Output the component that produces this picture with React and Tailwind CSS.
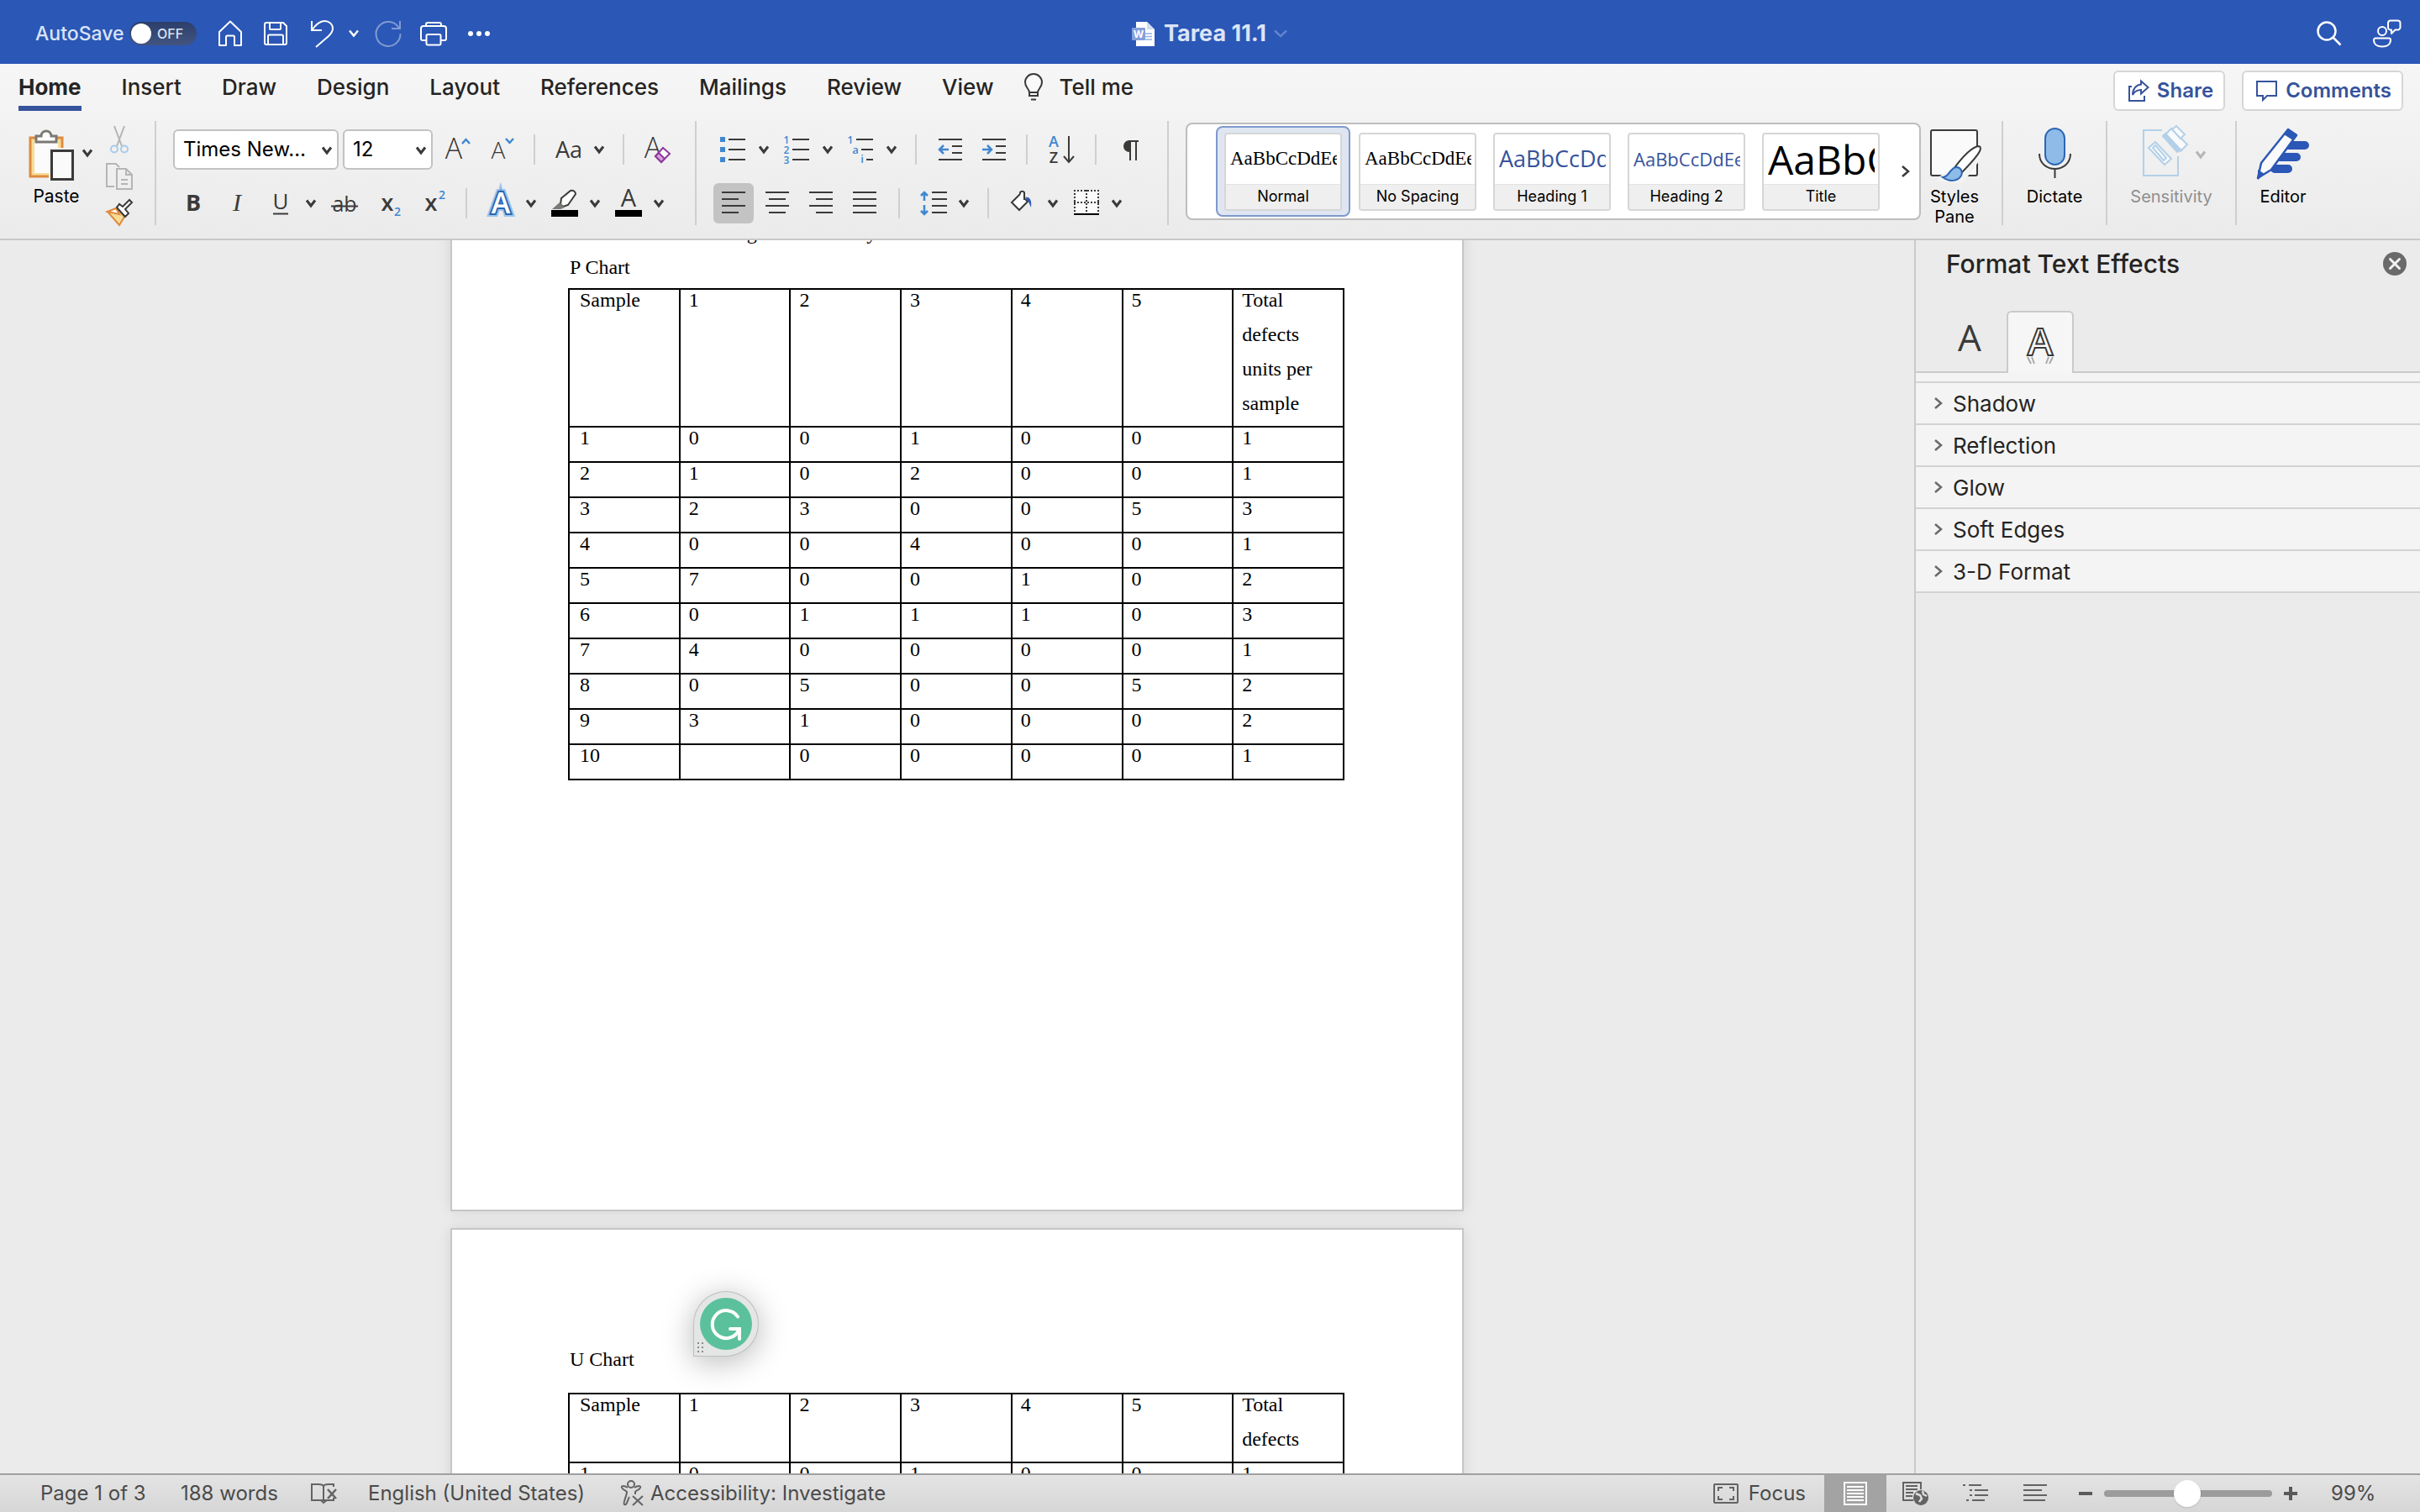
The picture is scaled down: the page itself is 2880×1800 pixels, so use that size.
import React from "react";

const K = "#3b3a39";
const B = "#3f87cf";

function Svg({ w = 32, h = 32, className = "", children, ...rest }) {
  return (
    <svg width={w} height={h} viewBox={`0 0 ${w} ${h}`} fill="none" className={`shrink-0 overflow-visible ${className}`} aria-hidden="true" {...rest}>
      {children}
    </svg>
  );
}

function Chevron({ label, className = "ml-[10px]", color = K }) {
  return (
    <button aria-label={label} className={`flex h-12 w-5 shrink-0 items-center justify-center ${className}`}>
      <Svg w={14} h={12}>
        <path d="M2 2.5 7 9l5-6.5" stroke={color} strokeWidth="3" />
      </Svg>
    </button>
  );
}

function Icon({ label, className = "", children }) {
  return (
    <button aria-label={label} className={`flex h-12 w-8 shrink-0 items-center justify-center ${className}`}>
      <Svg>{children}</Svg>
    </button>
  );
}

const Rule = ({ className = "" }) => <div className={`h-9 w-[2px] shrink-0 bg-[#cfcfcf] ${className}`} />;
const TallRule = ({ className = "" }) => <div className={`h-[124px] w-[2px] shrink-0 bg-[#cfcfcf] ${className}`} />;

function T({ x, y, size, fill = K, weight = 400, family = "Open Sans", children, ...rest }) {
  return (
    <text x={x} y={y} fontSize={size} fill={fill} fontWeight={weight} fontFamily={`"${family}", sans-serif`} textAnchor="middle" {...rest}>
      {children}
    </text>
  );
}

function TitleBar() {
  return (
    <header className="flex h-[76px] shrink-0 items-center bg-[#2b57b6] pt-1 text-[#dbe4f6]">
      <div className="flex flex-1 items-center">
        <span id="autosave" className="ml-[42px] w-[100px] text-[23px] font-medium whitespace-nowrap">AutoSave</span>
        <button role="switch" aria-checked="false" aria-labelledby="autosave" className="ml-3 flex h-7 w-20 items-center rounded-full bg-gradient-to-b from-[#2c3f6b] to-[#435480] pl-[2px]">
          <span className="h-6 w-6 rounded-full bg-white" />
          <span className="ml-[7px] text-[16px] font-medium">OFF</span>
        </button>
        <button aria-label="Home" className="ml-6">
          <Svg stroke="#fff" strokeWidth="2"><path d="M3 14 16 1.500l13 12.500v16h-8v-10a1.500 1.500 0 0 0-1.500-1.500h-7A1.500 1.500 0 0 0 11 20v10H3z" strokeLinejoin="round" /></Svg>
        </button>
        <button aria-label="Save" className="ml-[22px]">
          <Svg stroke="#fff" strokeWidth="2"><path d="M5 3h20l4 4v20a2 2 0 0 1-2 2H5a2 2 0 0 1-2-2V5a2 2 0 0 1 2-2zM9 3v7a1 1 0 0 0 1 1h11a1 1 0 0 0 1-1V3M7 29V19a1.500 1.500 0 0 1 1.500-1.500h15A1.500 1.500 0 0 1 25 19v10" /></Svg>
        </button>
        <button aria-label="Undo" className="ml-6">
          <Svg stroke="#fff" strokeWidth="2"><path d="M3 1v11h12M3 12C8 5 13 1 18 1c6 0 10 4 10 9 0 4-2 6-5 9L8 32" /></Svg>
        </button>
        <button aria-label="Undo history" className="ml-[14px]">
          <Svg w={14} h={12}><path d="M2 2.500 7 8.500l5-6" stroke="#fff" strokeWidth="2.500" /></Svg>
        </button>
        <button aria-label="Redo" className="ml-[18px]">
          <Svg stroke="#809bd3" strokeWidth="2"><path d="M30 1v9H20M29 10A14.500 14.500 0 1 0 30.500 16" /></Svg>
        </button>
        <button aria-label="Print" className="ml-[22px]">
          <Svg stroke="#fff" strokeWidth="2"><path d="M7 7V5a2 2 0 0 1 2-2h14a2 2 0 0 1 2 2v2M8 24H3a2 2 0 0 1-2-2V10a3 3 0 0 1 3-3h24a3 3 0 0 1 3 3v12a2 2 0 0 1-2 2h-5M7.500 18.500a1.500 1.500 0 0 1 1.500-1.500h14a1.500 1.500 0 0 1 1.500 1.500V28a1.500 1.500 0 0 1-1.500 1.500H9A1.500 1.500 0 0 1 7.500 28z" /></Svg>
        </button>
        <button aria-label="More" className="ml-[22px]">
          <Svg><circle cx="6" cy="16" r="3" fill="#fff" /><circle cx="16" cy="16" r="3" fill="#fff" /><circle cx="26" cy="16" r="3" fill="#fff" /></Svg>
        </button>
      </div>
      <div className="flex items-center">
        <Svg w={28} h={32}>
          <path d="M5 2h13l9 9v20H5z" fill="#fff" />
          <path d="M18 2v9h9z" fill="#cfdcf3" />
          <path d="M16 16h8M16 19.500h8M16 23h8" stroke="#8fb0e6" strokeWidth="1.500" />
          <rect x="0" y="9" width="16" height="15" rx="1" fill="#84a0da" />
          <T x="8" y="21" size="12" fill="#fff" weight="700" family="Inter">W</T>
        </Svg>
        <span className="ml-[10px] text-[27px] font-bold">Tarea 11.1</span>
        <button aria-label="Document menu" className="ml-2">
          <Svg w={18} h={12}><path d="M2 2.500 9 9l7-6.500" stroke="#6284cb" strokeWidth="2.500" /></Svg>
        </button>
      </div>
      <div className="flex flex-1 items-center justify-end">
        <button aria-label="Search"><Svg stroke="#fff" strokeWidth="2.500"><circle cx="13" cy="13" r="10.500" /><path d="m20.500 20.500 9 9" /></Svg></button>
        <button aria-label="Activity" className="mr-[22px] ml-9">
          <Svg w={34} h={34} stroke="#fff" strokeWidth="2">
            <circle cx="11" cy="14" r="5" />
            <path d="M3 22.500h16a2 2 0 0 1 2 2c0 5-4 8-10 8s-10-3-10-8a2 2 0 0 1 2-2z" />
            <path d="M20.500 1.500h9a3 3 0 0 1 3 3v5a3 3 0 0 1-3 3h-3L22 17v-4.500a3 3 0 0 1-4-3v-5a3 3 0 0 1 2.500-3z" strokeLinejoin="round" />
          </Svg>
        </button>
      </div>
    </header>
  );
}

const TABS = ["Insert", "Draw", "Design", "Layout", "References", "Mailings", "Review", "View"];

function Tabs() {
  return (
    <nav className="flex h-14 items-start pt-2 pr-5 pl-[22px] text-[26px] font-medium text-[#252423]">
      <div className="flex flex-1 items-start gap-12 pt-1">
        <button className="flex h-11 items-start border-b-[6px] border-[#36539c] font-bold leading-8">Home</button>
        {TABS.map((t) => (
          <button key={t} className="leading-8">{t}</button>
        ))}
        <button className="-ml-3 flex items-center gap-[18px] leading-8">
          <Svg w={24} h={32} stroke="#3b3a39" strokeWidth="2">
            <path d="M7 22c0-4-5-6-5-12a10 10 0 0 1 20 0c0 6-5 8-5 12v4H7zM7 22h10M9 30.500h6" fill="#fafafa" />
          </Svg>
          Tell me
        </button>
      </div>
      <div className="flex gap-5 font-semibold text-[#36539c]">
        <button className="flex h-12 items-center gap-2 rounded-md border-2 border-[#d6d6d6] bg-white pr-3 pl-[14px] text-[24px]">
          <Svg w={28} h={28} stroke="#36539c" strokeWidth="2">
            <path d="M6 9H3v17h18v-6" />
            <path d="M17 2.500 25.500 10 17 17.500V13c-4 0-8 2-10 6 0-7 4-12 10-12.500z" />
          </Svg>
          Share
        </button>
        <button className="flex h-12 items-center gap-2 rounded-md border-2 border-[#d6d6d6] bg-white pr-3 pl-[14px] text-[24px]">
          <Svg w={28} h={28} stroke="#36539c" strokeWidth="2"><path d="M2 3h23v17H14l-5 5v-5H2z" /></Svg>
          Comments
        </button>
      </div>
    </nav>
  );
}

function Dropdown({ label, value, className }) {
  return (
    <div className={`relative h-12 shrink-0 ${className}`}>
      <select aria-label={label} className="h-full w-full appearance-none rounded-md border-2 border-[#c2c2c2] bg-white pl-[10px] text-[24px] text-black">
        <option>{value}</option>
      </select>
      <Svg w={14} h={12} className="pointer-events-none absolute top-[19px] right-[7px]">
        <path d="M2 2.500 7 9l5-6.500" stroke={K} strokeWidth="3" />
      </Svg>
    </div>
  );
}

function Clipboard() {
  return (
    <div className="flex pl-[32px]">
      <div className="flex w-[70px] flex-col pt-[10px]">
        <button className="flex flex-col items-start">
          <Svg w={56} h={62}>
            <path d="M4 10h38v46H4z" fill="#f6dc97" stroke="#e08a3e" strokeWidth="3" />
            <path d="M9 14h28v38H9z" fill="#fbfbfb" />
            <path d="M11 15V8h6c0-8 12-8 12 0h6v7z" fill="#fff" stroke="#7a7974" strokeWidth="3" />
            <path d="M26 22h30v40H26z" fill="#f2f2f2" />
            <path d="M29.500 25.500h25v34h-25z" fill="#fafafa" stroke={K} strokeWidth="3" />
          </Svg>
          <span className="mt-[6px] self-center text-[21px] leading-6 text-black">Paste</span>
        </button>
      </div>
      <Chevron label="Paste options" className="-ml-2 mt-[14px]" />
      <div className="ml-3 flex flex-col gap-3 pt-[6px]">
        <button aria-label="Cut">
          <Svg stroke="#b5b5b5" strokeWidth="2">
            <path d="M10 0l9 24M22 0l-9 24" />
            <circle cx="10" cy="27.500" r="4" stroke="#a9cbe8" /><circle cx="22" cy="27.500" r="4" stroke="#a9cbe8" />
          </Svg>
        </button>
        <button aria-label="Copy">
          <Svg stroke="#b5b5b5" strokeWidth="2"><path d="M10 28H1V1h11l4 4M13 7h11l7 7v17H13zM24 7v7h7M18 20h8M18 25h8" /></Svg>
        </button>
        <button aria-label="Format painter">
          <Svg strokeWidth="2">
            <path d="M2 14 16 30l6-10-9-10z" fill="#f6dc97" stroke="#e08a3e" />
            <path d="m2 14 14 3-4-7z" fill="#fff" stroke="#e08a3e" />
            <path d="m13 9 10 11 4-4-4-5 8-8-3-3-8 8-4-3z" fill="#fff" stroke={K} />
          </Svg>
        </button>
      </div>
    </div>
  );
}

function FontGroup() {
  return (
    <div className="ml-5 flex flex-col gap-4 pt-[10px]">
      <div className="flex items-center">
        <Dropdown label="Font" value="Times New…" className="w-[197px]" />
        <Dropdown label="Font size" value="12" className="ml-[5px] w-[107px]" />
        <Icon label="Increase font size" className="ml-[14px]">
          <T x="11" y="27" size="34" weight="300">A</T><path d="m21 9 4.500-5L30 9" stroke={B} strokeWidth="2.500" />
        </Icon>
        <Icon label="Decrease font size" className="ml-5">
          <T x="12" y="27" size="28" weight="300">A</T><path d="m21 3 4.500 5L30 3" stroke={B} strokeWidth="2.500" />
        </Icon>
        <Rule className="ml-[22px]" />
        <Icon label="Change case" className="ml-6"><T x="16" y="26" size="27">Aa</T></Icon>
        <Chevron label="Case options" />
        <Rule className="ml-[18px]" />
        <Icon label="Clear formatting" className="ml-6">
          <T x="10" y="26" size="34" weight="300">A</T>
          <path d="M12 24 22 13l9 8-9 11z" fill="#f1f1f1" />
          <path d="m13 24 9-10 8 7-10 10z" fill="#fff" stroke="#8e3a9d" strokeWidth="2" />
          <path d="m13 24 4-4 7 7-4 4z" fill="#d3a5db" stroke="#8e3a9d" strokeWidth="2" />
        </Icon>
      </div>
      <div className="flex items-center">
        <Icon label="Bold" className="ml-2"><T x="16" y="25" size="27" weight="700">B</T></Icon>
        <Icon label="Italic" className="ml-5"><T x="16" y="25" size="30" family="Liberation Serif" fontStyle="italic">I</T></Icon>
        <Icon label="Underline" className="ml-5"><T x="16" y="23" size="26">U</T><path d="M7 28.500h18" stroke={K} strokeWidth="2" /></Icon>
        <Chevron label="Underline options" />
        <Icon label="Strikethrough" className="ml-[14px]"><T x="16" y="26" size="25">ab</T><path d="M0 19.500h32" stroke={K} strokeWidth="2" /></Icon>
        <Icon label="Subscript" className="ml-6"><T x="11" y="25" size="27" weight="600">x</T><T x="23" y="31" size="14" fill={B} weight="600">2</T></Icon>
        <Icon label="Superscript" className="ml-5"><T x="11" y="25" size="27" weight="600">x</T><T x="24" y="11" size="14" fill={B} weight="600">2</T></Icon>
        <Rule className="ml-5" />
        <Icon label="Text effects" className="ml-6">
          <T x="16" y="28" size="34" fill="#fff" weight="600" stroke="#9cc3ea" strokeWidth="8">A</T>
          <T x="16" y="28" size="34" fill="#fff" weight="600" stroke="#2b67b5" strokeWidth="4" paintOrder="stroke">A</T>
        </Icon>
        <Chevron label="Text effect options" />
        <Icon label="Highlight" className="ml-[14px]">
          <path d="M12 10 23 1c3-1 6 1 6 4l-9 13-6 2-3-3z" fill="#fff" stroke={K} strokeWidth="2" />
          <path d="m10 15 6 6-5 2H1z" fill="#7a7974" /><path d="M0 24h32v8H0z" fill="#000" />
        </Icon>
        <Chevron label="Highlight options" />
        <Icon label="Font colour" className="ml-[14px]"><T x="16" y="20" size="29">A</T><path d="M0 24h32v8H0z" fill="#000" /></Icon>
        <Chevron label="Font colour options" />
      </div>
    </div>
  );
}

const Lines = ({ d }) => <path d={d} stroke={K} strokeWidth="2" />;

function Align({ label, d, active }) {
  return (
    <button aria-label={label} aria-pressed={!!active} className={active ? "flex h-12 w-12 items-center justify-center rounded-md bg-[#c3c3c3]" : "flex h-12 w-12 items-center justify-center"}>
      <Svg><Lines d={d} /></Svg>
    </button>
  );
}

function ParagraphGroup() {
  return (
    <div className="ml-5 flex flex-col gap-4 pt-[10px]">
      <div className="flex items-center pl-2">
        <Icon label="Bullets">
          <path d="M0 1h6v6H0zM0 13h6v6H0zM0 25h6v6H0z" fill={B} /><Lines d="M10 4h20M10 16h20M10 28h20" />
        </Icon>
        <Chevron label="Bullet options" />
        <Icon label="Numbering" className="ml-[14px]">
          <T x="3" y="9" size="12" fill={B} weight="600">1</T><T x="3" y="21" size="12" fill={B} weight="600">2</T><T x="3" y="33" size="12" fill={B} weight="600">3</T>
          <Lines d="M10 4h20M10 16h20M10 28h20" />
        </Icon>
        <Chevron label="Numbering options" />
        <Icon label="Multilevel list" className="ml-[14px]">
          <T x="3" y="9" size="12" fill={B} weight="600">1</T><T x="9" y="21" size="13" fill={B} weight="600">a</T><T x="17" y="32" size="13" fill={B} weight="600">i</T>
          <Lines d="M10 4h20M16 16h14M22 28h8" />
        </Icon>
        <Chevron label="Multilevel options" />
        <Rule className="ml-[18px]" />
        <Icon label="Decrease indent" className="ml-6">
          <Lines d="M2 4h28M18 12h12M18 20h12M2 28h28" /><path d="M3 16h11M8 11l-5 5 5 5" stroke={B} strokeWidth="2.500" />
        </Icon>
        <Icon label="Increase indent" className="ml-5">
          <Lines d="M2 4h28M18 12h12M18 20h12M2 28h28" /><path d="M2 16h11M8 11l5 5-5 5" stroke={B} strokeWidth="2.500" />
        </Icon>
        <Rule className="ml-[22px]" />
        <Icon label="Sort" className="ml-6">
          <T x="7" y="13" size="18" fill={B} weight="600">A</T><T x="7" y="32" size="18" weight="600">Z</T>
          <path d="M25 0v30M19 24l6 7 6-7" stroke={K} strokeWidth="2" />
        </Icon>
        <Rule className="ml-6" />
        <Icon label="Show formatting marks" className="ml-6">
          <path d="M15 5a7 7 0 0 0 0 14z" fill={K} /><path d="M14 6h12M16 5v24M23 6v23" stroke={K} strokeWidth="2" />
        </Icon>
      </div>
      <div className="flex items-center">
        <div className="flex gap-1">
          <Align label="Align left" active d="M2 3h28M2 11h20M2 19h28M2 27h20" />
          <Align label="Align centre" d="M2 3h28M6 11h20M2 19h28M6 27h20" />
          <Align label="Align right" d="M2 3h28M10 11h20M2 19h28M10 27h20" />
          <Align label="Justify" d="M2 3h28M2 11h28M2 19h28M2 27h28" />
        </div>
        <Rule className="ml-4" />
        <Icon label="Line spacing" className="ml-6">
          <path d="M5 3v10M1 7l4-4 4 4M5 18v11M1 25l4 4 4-4" stroke={B} strokeWidth="2.500" /><Lines d="M14 3h18M14 11h18M14 19h18M14 27h18" />
        </Icon>
        <Chevron label="Line spacing options" />
        <Rule className="ml-[18px]" />
        <Icon label="Shading" className="ml-6">
          <path d="m13 5-10 10 9 9 10-10-3-3M13 5v-2a3 3 0 0 1 5 0v9" stroke={K} strokeWidth="2" fill="#fff" />
          <path d="M19 9c6-1 8 4 7 12l-3-7z" fill="#2b57b6" />
        </Icon>
        <Chevron label="Shading options" />
        <Icon label="Borders" className="ml-[14px]">
          <path d="M2 1h28v26H2z" fill="#fafafa" />
          <path d="M1 1h30M1 15h30M2 0v28M16 0v28M30 0v28" stroke={K} strokeWidth="2" strokeDasharray="2 2" /><path d="M1 29h30" stroke="#000" strokeWidth="2" />
        </Icon>
        <Chevron label="Border options" />
      </div>
    </div>
  );
}

const STYLES = [
  { name: "Normal", sample: "AaBbCcDdEe", cls: "font-['Liberation_Serif',serif] text-[23px] text-black", active: true },
  { name: "No Spacing", sample: "AaBbCcDdEe", cls: "font-['Liberation_Serif',serif] text-[23px] text-black" },
  { name: "Heading 1", sample: "AaBbCcDdEe", cls: "font-['Open_Sans',sans-serif] text-[27px] text-[#36539c]" },
  { name: "Heading 2", sample: "AaBbCcDdEe", cls: "font-['Open_Sans',sans-serif] text-[22px] text-[#36539c]" },
  { name: "Title", sample: "AaBbCc", cls: "font-['Open_Sans',sans-serif] text-[48px] text-black" },
];

function StyleGallery() {
  return (
    <div className="ml-5 mt-[2px] flex h-[116px] min-w-0 flex-1 items-center overflow-hidden rounded-lg border-2 border-[#bdbdbd] bg-white pl-[34px]">
      {STYLES.map((s) => (
        <button key={s.name} aria-pressed={!!s.active} className={s.active ? "flex h-[108px] w-40 shrink-0 justify-center rounded-lg border-2 border-[#7f99cc] bg-[#dfe6f2] pt-[6px]" : "flex h-[108px] w-40 shrink-0 justify-center pt-2"}>
          <span className="flex h-[93px] w-[140px] flex-col overflow-hidden rounded-sm border-2 border-[#d6d6d6] bg-white">
            <span className={`mr-1 ml-[5px] flex h-[60px] items-center overflow-hidden whitespace-nowrap ${s.cls}`}>{s.sample}</span>
            <span className="flex flex-1 items-center justify-center border-t border-[#e3e3e3] bg-[#efefef] pb-[2px] text-[18px] text-black">{s.name}</span>
          </span>
        </button>
      ))}
      <button aria-label="More styles" className="ml-auto pr-[10px]">
        <Svg w={12} h={18}><path d="m2 3 7 6-7 6" stroke={K} strokeWidth="2.500" /></Svg>
      </button>
    </div>
  );
}

function BigButton({ label, className, disabled, children }) {
  return (
    <button disabled={disabled} className={`flex flex-col items-center pt-[8px] text-[20px] leading-6 ${disabled ? "text-[#8f8f8f]" : "text-black"} ${className}`}>
      {children}
      <span className="mt-[2px]">{label}</span>
    </button>
  );
}

function RightGroups() {
  return (
    <div className="flex shrink-0">
      <BigButton label={<>Styles<br />Pane</>} className="w-[80px]">
        <Svg w={64} h={68}>
          <rect x="4" y="3" width="55" height="54" rx="2" fill="#fafafa" stroke={K} strokeWidth="2" />
          <path d="M62 20 30 48 14 58l-2 6 30 2 22-30z" fill="#f3f3f3" />
          <path d="M31 49C42 34 52 24 60 22c4 0 3 4 2 6-4 8-14 18-24 28z" fill="#fff" stroke={K} strokeWidth="2" />
          <path d="M18 59c8 0 8-11 16-12 6 0 8 6 6 10-4 7-14 8-22 2z" fill="#8fbbe8" stroke="#2b67b5" strokeWidth="2" />
        </Svg>
      </BigButton>
      <TallRule className="ml-4" />
      <BigButton label="Dictate" className="w-[122px]">
        <Svg w={44} h={68}>
          <rect x="11" y="1" width="23" height="43" rx="11.500" fill="#8fbbe8" stroke="#2b67b5" strokeWidth="2" />
          <path d="M4 31c0 24 37 24 37 0M22.500 49v11" stroke={K} strokeWidth="2" />
        </Svg>
      </BigButton>
      <TallRule />
      <div className="relative">
        <BigButton label="Sensitivity" className="w-[152px]" disabled>
          <Svg w={68} h={68} stroke="#b3d0e8" strokeWidth="2">
            <path d="M23 3H1v54h41V34" />
            <path d="m7 24 8-7 19 20-8 7z" fill="#f8fafc" /><path d="m12 24 3-3 13 15-3 3z" />
            <path d="m26 9 8-8 19 19-8 8z" fill="#f8fafc" /><path d="m24 10 3-3 18 19-4 3z" fill="#b3d0e8" />
            <path d="m35 2 5-4 10 10-5 5z" fill="#f8fafc" />
          </Svg>
        </BigButton>
        <Svg w={14} h={12} className="absolute top-[34px] right-[34px]"><path d="M2 2.500 7 9l5-6.500" stroke="#b5b5b5" strokeWidth="3" /></Svg>
      </div>
      <TallRule />
      <BigButton label="Editor" className="mr-[108px] w-[110px]">
        <Svg w={64} h={68}>
          <path d="M36 21h22M28 35h20M22 49h16" stroke="#2b57b6" strokeWidth="10" strokeLinecap="round" />
          <path d="M38 2 48 9 18 50 2 60 6 42z" fill="#fafafa" stroke="#2b57b6" strokeWidth="2.500" strokeLinejoin="round" />
          <path d="m38 1 11 7-5 7-11-7zM2 50l8 5-8 7z" fill="#2b57b6" />
        </Svg>
      </BigButton>
    </div>
  );
}

function Ribbon() {
  return (
    <section className="shrink-0 border-b-2 border-[#c8c8c8] bg-gradient-to-b from-[#f6f6f6] to-[#ebebeb]">
      <Tabs />
      <div className="flex h-[152px] items-start pt-3">
        <Clipboard />
        <TallRule className="ml-[26px]" />
        <FontGroup />
        <TallRule className="ml-7" />
        <ParagraphGroup />
        <TallRule className="ml-7" />
        <StyleGallery />
        <RightGroups />
      </div>
    </section>
  );
}

const HEAD_P = ["Sample", "1", "2", "3", "4", "5", "Total defects units per sample"];
const ROWS_P = [
  ["1", "0", "0", "1", "0", "0", "1"],
  ["2", "1", "0", "2", "0", "0", "1"],
  ["3", "2", "3", "0", "0", "5", "3"],
  ["4", "0", "0", "4", "0", "0", "1"],
  ["5", "7", "0", "0", "1", "0", "2"],
  ["6", "0", "1", "1", "1", "0", "3"],
  ["7", "4", "0", "0", "0", "0", "1"],
  ["8", "0", "5", "0", "0", "5", "2"],
  ["9", "3", "1", "0", "0", "0", "2"],
  ["10", "", "0", "0", "0", "0", "1"],
];
const HEAD_U = ["Sample", "1", "2", "3", "4", "5", "Total defects"];
const ROWS_U = [["1", "0", "0", "1", "0", "0", "1"]];

function DataTable({ label, head, rows }) {
  return (
    <table aria-label={label} className="w-full table-fixed border-collapse border-2 border-black">
      <thead>
        <tr>
          {head.map((h, i) => (
            <th key={i} scope="col" className="border-2 border-black pt-0 pr-2 pl-[10px] text-left align-top font-normal first:pl-3">
              <span className="-mt-2 mb-[6px] block leading-[41px]">{h}</span>
            </th>
          ))}
        </tr>
      </thead>
      <tbody>
        {rows.map((r, i) => (
          <tr key={i}>
            {r.map((c, j) => (
              <td key={j} className="h-[42px] border-2 border-black pl-[10px] align-top leading-6 first:pl-3">{c}</td>
            ))}
          </tr>
        ))}
      </tbody>
    </table>
  );
}

function Page({ className = "", children }) {
  return (
    <article className={`aspect-[1206/1558] w-[1206px] shrink-0 border-2 border-[#c6c6c6] bg-white pr-[140px] pl-[138px] font-['Liberation_Serif',serif] text-[24px] text-black shadow-[0_0_16px_rgba(0,0,0,0.10)] ${className}`}>
      {children}
    </article>
  );
}

function Document() {
  return (
    <main className="relative flex min-w-0 flex-1 flex-col items-center gap-5 overflow-hidden bg-[#ebebeb]">
      <Page className="-mt-[402px] pt-[371px]">
        <p className="pl-14 leading-[41px]">Student attending the University</p>
        <p className="pl-[2px] leading-[41px]">P Chart</p>
        <div className="mt-1">
          <DataTable label="P Chart" head={HEAD_P} rows={ROWS_P} />
        </div>
      </Page>
      <Page className="pt-[134px]">
        <p className="pl-[2px] leading-[41px]">U Chart</p>
        <div className="mt-[19px]">
          <DataTable label="U Chart" head={HEAD_U} rows={ROWS_U} />
        </div>
      </Page>
      <button aria-label="Grammarly" className="absolute bottom-[139px] left-[825px] flex h-[78px] w-[78px] items-center justify-center rounded-full rounded-bl-lg border border-[#bdbfbe] bg-[#e4e6e5] shadow-[0_6px_36px_rgba(0,0,0,0.28)]">
        <Svg w={62} h={62}>
          <circle cx="31" cy="31" r="31" fill="#5bc19c" />
          <path d="M45 22.500A16.500 16.500 0 1 0 46 39M36 37h11v12" stroke="#fff" strokeWidth="4" strokeLinecap="round" />
        </Svg>
        <Svg w={8} h={12} className="absolute bottom-1 left-1">
          <path d="M0 1h2M5 1h2M0 6h2M5 6h2M0 11h2M5 11h2" stroke="#8c8c8c" strokeWidth="2" />
        </Svg>
      </button>
    </main>
  );
}

function Panel() {
  return (
    <aside className="flex w-[602px] shrink-0 flex-col border-l-2 border-[#cacaca] bg-[#ebebeb] text-[#252423]">
      <div className="flex h-14 items-center justify-between pr-4 pl-[36px]">
        <h2 className="text-[30px] font-medium">Format Text Effects</h2>
        <button aria-label="Close">
          <Svg w={28} h={28}><circle cx="14" cy="14" r="14" fill="#6a6a6a" /><path d="m8.500 8.500 11 11m0-11-11 11" stroke="#f2f2f2" strokeWidth="3" strokeLinecap="round" /></Svg>
        </button>
      </div>
      <div role="tablist" className="mt-7 flex h-[74px]">
        <button role="tab" aria-selected="false" aria-label="Text fill" className="flex w-[108px] items-center justify-center border-b-2 border-[#cacaca] pl-5">
          <Svg w={40} h={44}><T x="20" y="34" size="44">A</T></Svg>
        </button>
        <button role="tab" aria-selected="true" aria-label="Text effects" className="flex w-20 items-center justify-center rounded-t-md border-2 border-b-0 border-[#cacaca] bg-[#f6f6f6]">
          <Svg w={40} h={52}>
            <T x="20" y="41" size="46" weight="600" fill="#fff" stroke={K} strokeWidth="2">A</T>
            <path d="m5 43 4 8M10 43l3 8M35 43l-4 8M30 43l-3 8" stroke="#aaa" strokeWidth="2" />
          </Svg>
        </button>
        <div className="flex-1 border-b-2 border-[#cacaca]" />
      </div>
      <div className="bg-[#f4f4f4] pt-[10px]">
        {["Shadow", "Reflection", "Glow", "Soft Edges", "3-D Format"].map((n) => (
          <button key={n} className="flex h-[50px] w-full items-center border-t-2 border-[#d2d2d2] pl-[20px] text-[26px]">
            <Svg w={14} h={16}><path d="m3 2 7 6-7 6" stroke="#6a6a6a" strokeWidth="2.500" /></Svg>
            <span className="ml-[10px]">{n}</span>
          </button>
        ))}
        <div className="h-[2px] bg-[#d2d2d2]" />
      </div>
    </aside>
  );
}

function StatusBar() {
  const G = "#636363";
  return (
    <footer className="flex h-[46px] shrink-0 items-center border-t-2 border-[#a0a0a0] bg-gradient-to-b from-[#e4e4e4] to-[#d6d6d6] pl-[48px] text-[24px] whitespace-nowrap text-[#4b4b4b]">
      <button className="w-[167px] text-left">Page 1 of 3</button>
      <button className="w-[155px] text-left">188 words</button>
      <button aria-label="Proofing" className="w-[68px]">
        <Svg w={34} h={28} stroke={G} strokeWidth="2">
          <path d="M15 22h-6H1V3h8c4 0 6 1 6 3zM15 6c0-2 2-3 6-3h6v3M15 22h4M27 19v3h-8l-4 3-3-3" /><path d="m20 9 10 11M30 9 20 20" strokeWidth="2.500" />
        </Svg>
      </button>
      <button className="w-[300px] text-left">English (United States)</button>
      <button className="flex items-center gap-[6px]">
        <Svg w={30} h={32} stroke={G} strokeWidth="2">
          <circle cx="13" cy="5" r="4" />
          <path d="M9 9C4 6 1 7 2 9c1 3 5 3 6 5 0 5-5 13-3 15 3 2 4-6 6-9M17 9c5-3 8-2 7 0-1 3-5 3-6 5v3" /><path d="m15 19 12 11M27 19 15 30" />
        </Svg>
        Accessibility: Investigate
      </button>
      <div className="flex-1" />
      <button className="flex items-center gap-3">
        <Svg w={30} h={24} stroke={G} strokeWidth="2"><rect x="1" y="1" width="28" height="22" rx="1" /><path d="M6 9V5h5M19 5h5v4M24 15v4h-5M11 19H6v-4" /></Svg>
        Focus
      </button>
      <button aria-label="Print layout" aria-pressed="true" className="ml-[22px] flex h-full w-[74px] items-center justify-center bg-[#a3a3a3]">
        <Svg w={28} h={28} stroke="#fff" strokeWidth="2"><path d="M1 1h26v26H1zM4 6h20M4 10h20M4 14h20M4 18h20M4 22h20" /></Svg>
      </button>
      <button aria-label="Web layout" className="ml-[18px]">
        <Svg w={34} h={30} stroke={G} strokeWidth="2">
          <path d="M14 23H2V2h21v8M5 6h14M5 10h14M5 14h9M5 18h8" /><circle cx="23" cy="20" r="9" fill={G} stroke="none" /><path d="m17 15 5 2 2 4-3 4M25 12l1 4 4 2" stroke="#dedede" strokeWidth="2.500" />
        </Svg>
      </button>
      <button aria-label="Outline" className="ml-[39px]">
        <Svg w={30} h={24} stroke={G} strokeWidth="2"><path d="M0 2h3M7 2h15M8 8h3M14 8h16M8 14h3M14 14h16M4 20h3M11 20h15" /></Svg>
      </button>
      <button aria-label="Draft" className="ml-[42px]">
        <Svg w={28} h={24} stroke={G} strokeWidth="2"><path d="M0 2h28M0 8h22M0 14h28M0 20h26" /></Svg>
      </button>
      <button aria-label="Zoom out" className="ml-[38px]"><Svg w={16} h={16}><path d="M0 8h16" stroke="#5a5a5a" strokeWidth="4" /></Svg></button>
      <input
        type="range" min="10" max="190" defaultValue="99" aria-label="Zoom"
        className="mx-[14px] h-2 w-[200px] appearance-none rounded-full bg-[#9c9c9c] [&::-webkit-slider-thumb]:h-8 [&::-webkit-slider-thumb]:w-8 [&::-webkit-slider-thumb]:appearance-none [&::-webkit-slider-thumb]:rounded-full [&::-webkit-slider-thumb]:bg-white [&::-webkit-slider-thumb]:shadow"
      />
      <button aria-label="Zoom in"><Svg w={16} h={16}><path d="M0 8h16M8 0v16" stroke="#5a5a5a" strokeWidth="4" /></Svg></button>
      <button className="ml-[40px] w-[106px] text-left">99%</button>
    </footer>
  );
}

export default function App() {
  return (
    <div className="flex h-screen flex-col overflow-hidden bg-[#ebebeb] font-['Inter',sans-serif]">
      <TitleBar />
      <Ribbon />
      <div className="flex min-h-0 flex-1">
        <Document />
        <Panel />
      </div>
      <StatusBar />
    </div>
  );
}
